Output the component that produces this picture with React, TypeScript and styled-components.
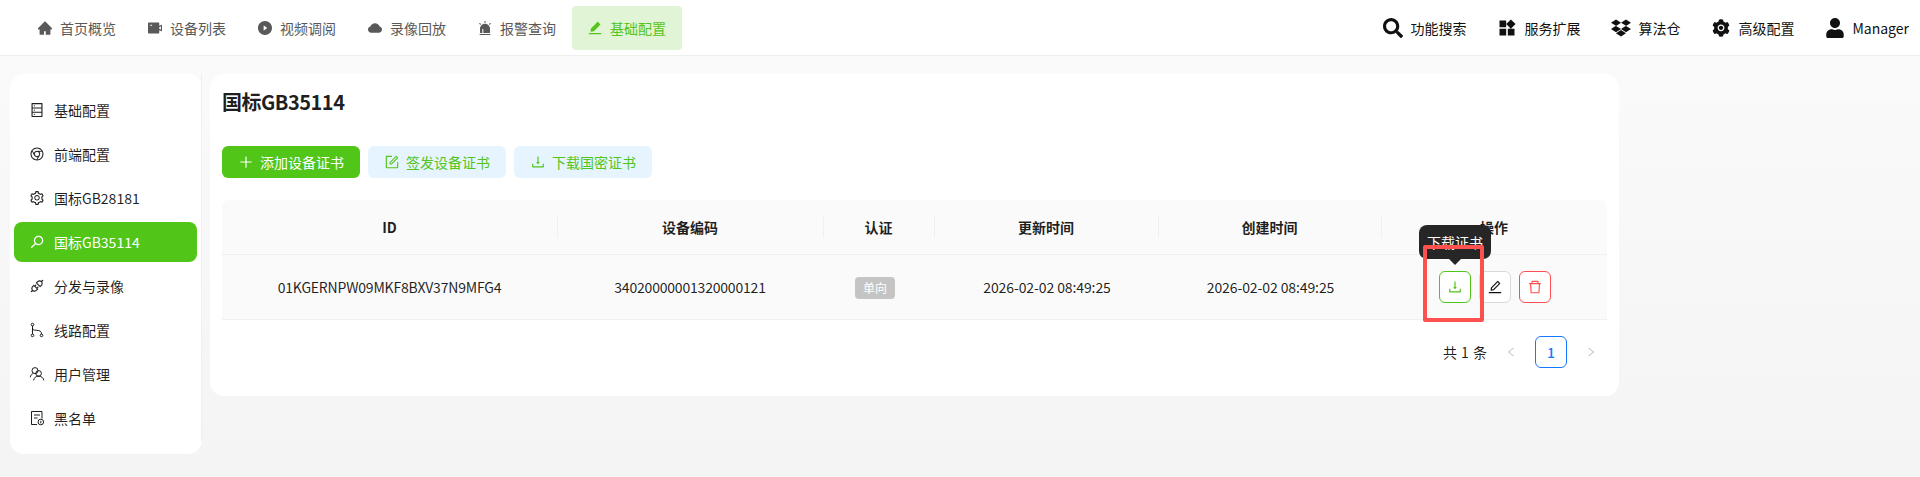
import React from "react";
import styled, { createGlobalStyle } from "styled-components";
import {
  AiFillAlert,
  AiFillCloud,
  AiFillEdit,
  AiFillHome,
  AiFillPlayCircle,
  AiFillSetting,
  AiFillVideoCamera,
  AiOutlineApi,
  AiOutlineChrome,
  AiOutlineDatabase,
  AiOutlineDelete,
  AiOutlineDownload,
  AiOutlineEdit,
  AiOutlineForm,
  AiOutlineLeft,
  AiOutlinePlus,
  AiOutlineRight,
  AiOutlineSearch,
  AiOutlineSetting,
} from "react-icons/ai";
import { FaDropbox, FaSearch, FaUser } from "react-icons/fa";
import { MdWidgets } from "react-icons/md";

const GREEN = "#52c41a";
const FONT = `"Noto Sans CJK SC", "Noto Sans", sans-serif`;

const GlobalStyle = createGlobalStyle`
  html, body {
    margin: 0;
    height: 100%;
    overflow: hidden;
    background: #f4f4f4;
    font-family: ${FONT};
    font-size: 14px;
    color: rgba(0, 0, 0, 0.88);
  }
`;

//#region STYLES
const Page = styled.div`
  height: 477px;
  background: linear-gradient(#fbfbfb, #f4f4f4);
`;
const Header = styled.header`
  display: flex;
  align-items: center;
  justify-content: space-between;
  box-sizing: border-box;
  height: 56px;
  padding: 0 11px 0 22px;
  background: #fff;
  border-bottom: 1px solid #eee;
`;
const Nav = styled.nav`
  display: flex;
`;
const NavItem = styled.div<{ $active?: boolean }>`
  display: flex;
  align-items: center;
  gap: 7px;
  box-sizing: border-box;
  width: 110px;
  height: 44px;
  padding-left: 15px;
  border-radius: 4px;
  color: ${(p) => (p.$active ? GREEN : "#595959")};
  background: ${(p) => (p.$active ? "#e2f4d6" : "transparent")};
  svg {
    width: 16px;
    height: 16px;
    flex: none;
  }
`;
const Tools = styled.div`
  display: flex;
  align-items: center;
  gap: 31px;
`;
const Tool = styled.div`
  display: flex;
  align-items: center;
  gap: 7px;
  color: #111;
  svg {
    width: 20px;
    height: 20px;
    flex: none;
  }
`;
const Body = styled.div`
  display: flex;
  align-items: flex-start;
  gap: 8px;
  padding: 18px 0 0 10px;
`;
const Sidebar = styled.aside`
  box-sizing: border-box;
  width: 192px;
  height: 380px;
  background: #fff;
  border-radius: 14px;
`;
const SideMenu = styled.div`
  box-sizing: border-box;
  height: 368px;
  padding: 16px 4px 0;
  border-right: 1px solid #f0f0f0;
`;
const SideItem = styled.div<{ $active?: boolean }>`
  display: flex;
  align-items: center;
  gap: 9px;
  height: 40px;
  margin-bottom: 4px;
  padding-left: 15px;
  border-radius: 8px;
  color: ${(p) => (p.$active ? "#fff" : "rgba(0, 0, 0, 0.88)")};
  background: ${(p) => (p.$active ? "#52c519" : "transparent")};
  svg {
    width: 16px;
    height: 16px;
    flex: none;
  }
`;
const FlippedSearch = styled(AiOutlineSearch)`
  transform: scaleX(-1);
`;
const Main = styled.main`
  box-sizing: border-box;
  width: 1409px;
  height: 322px;
  padding: 16px 12px;
  background: #fff;
  border-radius: 14px;
`;
const Title = styled.h1`
  margin: 0;
  font-size: 20px;
  line-height: 24px;
  font-weight: 700;
  letter-spacing: -0.5px;
`;
const Actions = styled.div`
  display: flex;
  gap: 8px;
  margin: 32px 0 22px;
`;
const ActionButton = styled.button<{ $primary?: boolean }>`
  display: flex;
  align-items: center;
  justify-content: center;
  gap: 6px;
  width: 138px;
  height: 32px;
  padding: 0;
  border: 0;
  border-radius: 6px;
  font: inherit;
  color: ${(p) => (p.$primary ? "#fff" : GREEN)};
  background: ${(p) => (p.$primary ? "#52c519" : "#e6f4ff")};
  svg {
    width: 16px;
    height: 16px;
  }
`;
const Table = styled.table`
  width: 1385px;
  table-layout: fixed;
  border-collapse: separate;
  border-spacing: 0;
  text-align: center;
`;
const Th = styled.th`
  position: relative;
  height: 54px;
  padding: 0;
  font-weight: 600;
  background: #fafafa;
  border-bottom: 1px solid #f0f0f0;
  &:first-child {
    border-top-left-radius: 8px;
  }
  &:last-child {
    border-top-right-radius: 8px;
  }
  &:not(:last-child)::after {
    content: "";
    position: absolute;
    top: 16px;
    right: -1px;
    z-index: 1;
    width: 1px;
    height: 22px;
    background: #f0f0f0;
  }
`;
const Td = styled.td`
  height: 64px;
  padding: 0;
  background: #fafafa;
  border-bottom: 1px solid #f0f0f0;
`;
const Code = styled.span`
  letter-spacing: -0.2px;
`;
const DateText = styled.span`
  margin-left: 2px;
  letter-spacing: -0.1px;
`;
const Tag = styled.span`
  display: inline-block;
  width: 40px;
  height: 22px;
  margin-right: 7px;
  border-radius: 4px;
  font-size: 12px;
  line-height: 22px;
  color: #fff;
  background: #c4c4c4;
  vertical-align: middle;
`;
const RowActions = styled.div`
  position: relative;
  display: flex;
  gap: 8px;
  margin-left: 58px;
`;
const IconButton = styled.button<{ $tone: "green" | "plain" | "red" }>`
  display: flex;
  align-items: center;
  justify-content: center;
  box-sizing: border-box;
  width: 32px;
  height: 32px;
  padding: 0;
  background: #fff;
  border-radius: 6px;
  border: 1px solid
    ${(p) =>
      p.$tone === "green" ? GREEN : p.$tone === "red" ? "#ff4d4f" : "#d9d9d9"};
  color: ${(p) =>
    p.$tone === "green" ? GREEN : p.$tone === "red" ? "#ff4d4f" : "#111"};
  svg {
    width: 16px;
    height: 16px;
  }
`;
const Tooltip = styled.div`
  position: absolute;
  left: -20px;
  top: -46px;
  z-index: 2;
  width: 72px;
  height: 34px;
  border-radius: 8px;
  line-height: 34px;
  text-align: center;
  color: #fff;
  background: #262626;
  &::after {
    content: "";
    position: absolute;
    left: 30px;
    bottom: -6px;
    border: 6px solid transparent;
    border-bottom: 0;
    border-top-color: #262626;
  }
`;
const Marker = styled.div`
  position: absolute;
  left: -16px;
  top: -26px;
  z-index: 3;
  box-sizing: border-box;
  width: 61px;
  height: 77px;
  border: 4px solid #ff5050;
  border-radius: 2px;
`;
const Pager = styled.div`
  display: flex;
  align-items: center;
  justify-content: flex-end;
  height: 32px;
  margin-top: 16px;
`;
const PagerTotal = styled.span`
  margin-right: 8px;
  word-spacing: 1px;
`;
const PagerArrow = styled.span`
  display: flex;
  align-items: center;
  justify-content: center;
  width: 32px;
  height: 32px;
  color: #c4c4c4;
  svg {
    width: 12px;
    height: 12px;
  }
`;
const PagerPage = styled.span`
  box-sizing: border-box;
  width: 32px;
  height: 32px;
  margin: 0 8px;
  border: 1px solid #1677ff;
  border-radius: 6px;
  line-height: 30px;
  text-align: center;
  font-weight: 500;
  color: #1677ff;
`;
//#endregion

const RouteIcon = () => (
  <svg viewBox="0 0 16 16" fill="none" stroke="currentColor" strokeWidth="1">
    <circle cx="3.5" cy="2.6" r="1.3" />
    <circle cx="3.5" cy="13.4" r="1.3" />
    <circle cx="12.5" cy="13.4" r="1.3" />
    <path d="M3.5 3.9v8.2M3.5 6.2c0 1.5 1 1.9 4 2.1 3.6.2 5 1 5 3.8" />
  </svg>
);

const UsersIcon = () => (
  <svg viewBox="0 0 16 16" fill="none" stroke="currentColor" strokeWidth="1">
    <circle cx="6" cy="4.6" r="3" />
    <circle cx="9.6" cy="7.4" r="2.8" />
    <path d="M1.2 11.2c.5-2 1.6-3.2 3-3.7M4.6 14.4c.4-2.6 2-4.2 5-4.2s4.6 1.6 5.2 4.2" />
  </svg>
);

const ReportIcon = () => (
  <svg viewBox="0 0 16 16" fill="none" stroke="currentColor" strokeWidth="1">
    <path d="M8 14.5H2.5v-13h10.5v7" />
    <path d="M5 5h6M5 8h3.5" />
    <circle cx="11.8" cy="12" r="2.8" />
    <path d="M11.8 10.8v2.6" />
  </svg>
);

const navItems = [
  { icon: <AiFillHome />, label: "首页概览" },
  { icon: <AiFillVideoCamera />, label: "设备列表" },
  { icon: <AiFillPlayCircle />, label: "视频调阅" },
  { icon: <AiFillCloud />, label: "录像回放" },
  { icon: <AiFillAlert />, label: "报警查询" },
  { icon: <AiFillEdit />, label: "基础配置", active: true },
];

const toolItems = [
  { icon: <FaSearch />, label: "功能搜索" },
  { icon: <MdWidgets />, label: "服务扩展" },
  { icon: <FaDropbox />, label: "算法仓" },
  { icon: <AiFillSetting />, label: "高级配置" },
  { icon: <FaUser />, label: "Manager" },
];

const sideItems = [
  { icon: <AiOutlineDatabase />, label: "基础配置" },
  { icon: <AiOutlineChrome />, label: "前端配置" },
  { icon: <AiOutlineSetting />, label: "国标GB28181" },
  { icon: <FlippedSearch />, label: "国标GB35114", active: true },
  { icon: <AiOutlineApi />, label: "分发与录像" },
  { icon: <RouteIcon />, label: "线路配置" },
  { icon: <UsersIcon />, label: "用户管理" },
  { icon: <ReportIcon />, label: "黑名单" },
];

const columns = [
  { title: "ID", width: 335 },
  { title: "设备编码", width: 266 },
  { title: "认证", width: 111 },
  { title: "更新时间", width: 224 },
  { title: "创建时间", width: 223 },
  { title: "操作", width: 226 },
];

const App = () => {
  return (
    <Page>
      <GlobalStyle />
      <Header>
        <Nav>
          {navItems.map((item) => (
            <NavItem key={item.label} $active={item.active}>
              {item.icon}
              {item.label}
            </NavItem>
          ))}
        </Nav>
        <Tools>
          {toolItems.map((item) => (
            <Tool key={item.label}>
              {item.icon}
              {item.label}
            </Tool>
          ))}
        </Tools>
      </Header>
      <Body>
        <Sidebar>
          <SideMenu>
            {sideItems.map((item) => (
              <SideItem key={item.label} $active={item.active}>
                {item.icon}
                {item.label}
              </SideItem>
            ))}
          </SideMenu>
        </Sidebar>
        <Main>
          <Title>国标GB35114</Title>
          <Actions>
            <ActionButton $primary>
              <AiOutlinePlus />
              添加设备证书
            </ActionButton>
            <ActionButton>
              <AiOutlineForm />
              签发设备证书
            </ActionButton>
            <ActionButton>
              <AiOutlineDownload />
              下载国密证书
            </ActionButton>
          </Actions>
          <Table>
            <colgroup>
              {columns.map((col) => (
                <col key={col.title} width={col.width} />
              ))}
            </colgroup>
            <thead>
              <tr>
                {columns.map((col) => (
                  <Th key={col.title}>{col.title}</Th>
                ))}
              </tr>
            </thead>
            <tbody>
              <tr>
                <Td>
                  <Code>01KGERNPW09MKF8BXV37N9MFG4</Code>
                </Td>
                <Td>
                  <Code>34020000001320000121</Code>
                </Td>
                <Td>
                  <Tag>单向</Tag>
                </Td>
                <Td>
                  <DateText>2026-02-02 08:49:25</DateText>
                </Td>
                <Td>
                  <DateText>2026-02-02 08:49:25</DateText>
                </Td>
                <Td>
                  <RowActions>
                    <IconButton $tone="green">
                      <AiOutlineDownload />
                    </IconButton>
                    <IconButton $tone="plain">
                      <AiOutlineEdit />
                    </IconButton>
                    <IconButton $tone="red">
                      <AiOutlineDelete />
                    </IconButton>
                    <Tooltip>下载证书</Tooltip>
                    <Marker />
                  </RowActions>
                </Td>
              </tr>
            </tbody>
          </Table>
          <Pager>
            <PagerTotal>共 1 条</PagerTotal>
            <PagerArrow>
              <AiOutlineLeft />
            </PagerArrow>
            <PagerPage>1</PagerPage>
            <PagerArrow>
              <AiOutlineRight />
            </PagerArrow>
          </Pager>
        </Main>
      </Body>
    </Page>
  );
};

export default App;
